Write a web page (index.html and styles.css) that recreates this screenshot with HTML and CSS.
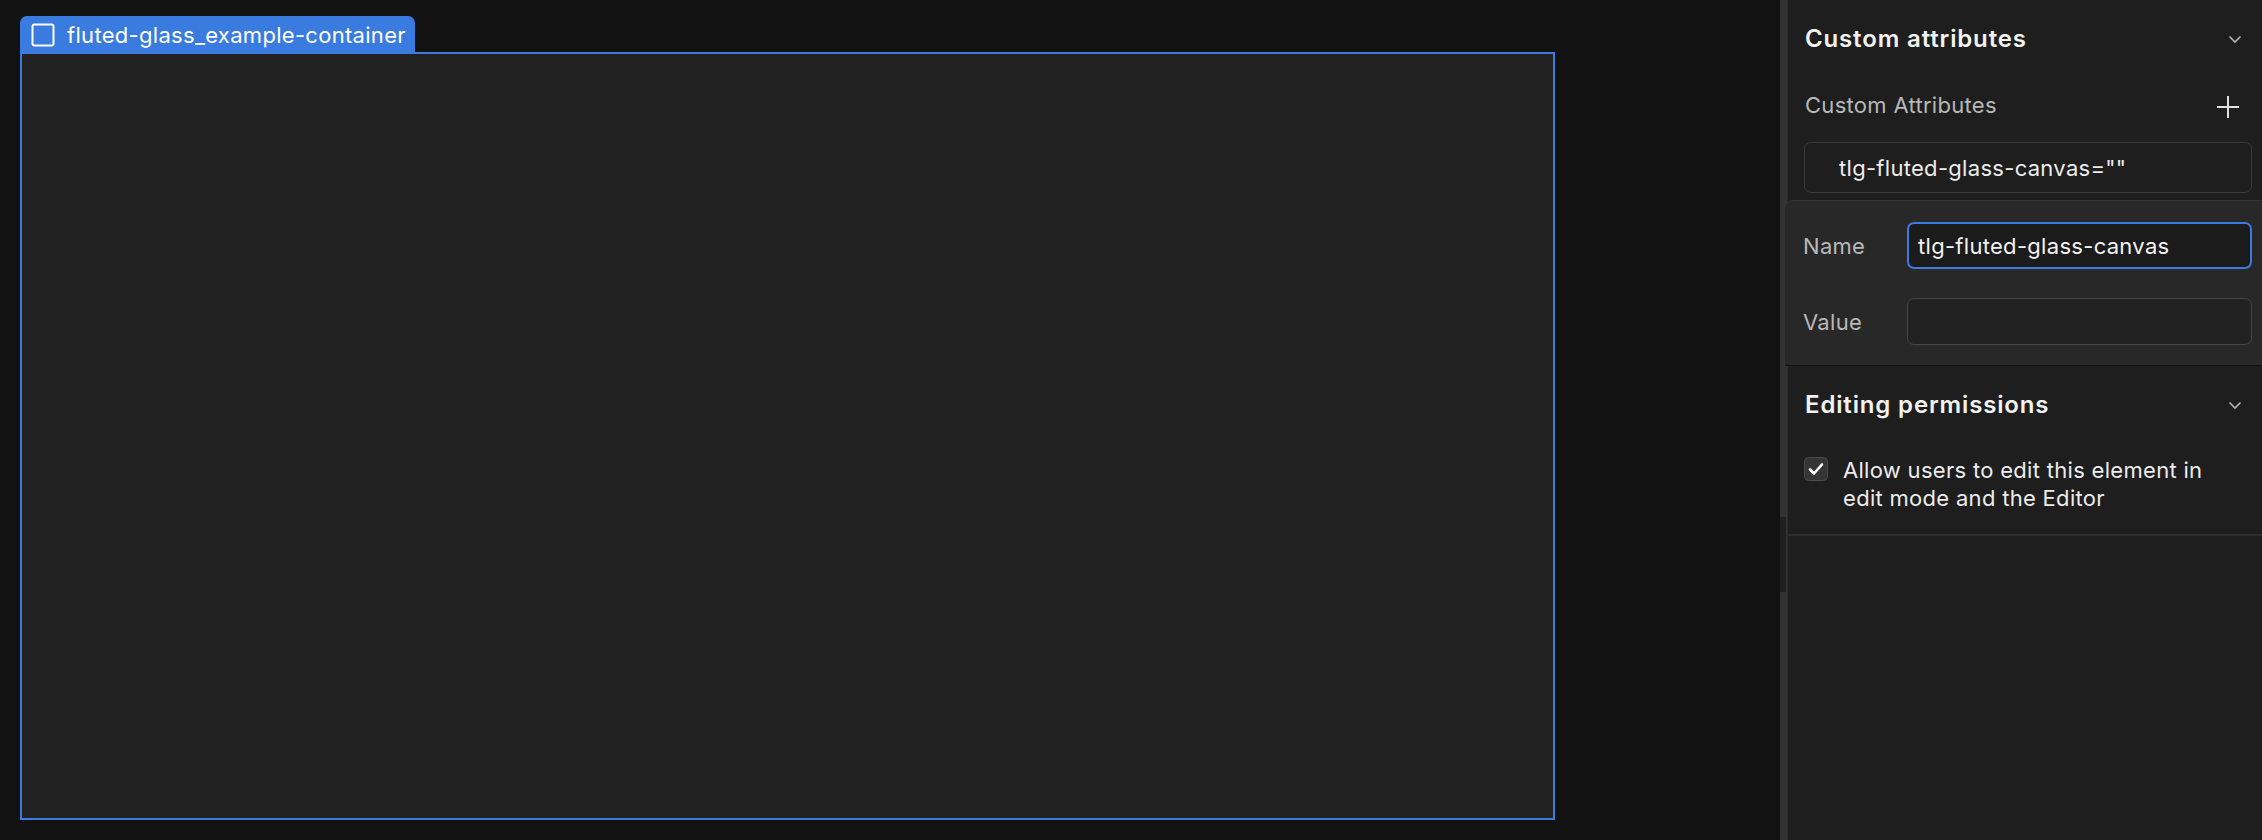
FILE: index.html
```html
<!DOCTYPE html>
<html>
  <head>
    <meta charset="UTF-8">
    <title>Custom attributes</title>
    <link rel="stylesheet" href="styles.css">
  </head>
  <body>
    <div class="canvas">
      <div class="tab">
        <svg class="tab-icon" width="24" height="24" viewBox="0 0 24 24"><rect x="1.5" y="1.5" width="21" height="21" rx="2" fill="none" stroke="#fff" stroke-width="2"/></svg>
        <span>fluted-glass_example-container</span>
      </div>
      <div class="frame"></div>
    </div>

    <div class="strip"><div class="strip-handle"></div></div>

    <div class="panel">
      <!-- Custom attributes -->
      <div class="section-head">
        <h3>Custom attributes</h3>
        <svg class="chevron" width="14" height="9" viewBox="0 0 14 9"><polyline points="1.5,1.5 7,7 12.5,1.5" fill="none" stroke="#b5b5b5" stroke-width="1.6"/></svg>
      </div>
      <div class="attr-label">
        <span>Custom Attributes</span>
        <svg width="24" height="24" viewBox="0 0 24 24"><path d="M12 1v22M1 12h22" stroke="#e0e0e0" stroke-width="2" fill="none"/></svg>
      </div>
      <div class="attr-item">tlg-fluted-glass-canvas=""</div>

      <div class="popover">
        <div class="field">
          <label>Name</label>
          <div class="input focus">tlg-fluted-glass-canvas</div>
        </div>
        <div class="field">
          <label>Value</label>
          <div class="input"></div>
        </div>
      </div>

      <!-- Editing permissions -->
      <div class="section-head">
        <h3>Editing permissions</h3>
        <svg class="chevron" width="14" height="9" viewBox="0 0 14 9"><polyline points="1.5,1.5 7,7 12.5,1.5" fill="none" stroke="#b5b5b5" stroke-width="1.6"/></svg>
      </div>
      <div class="check-row">
        <svg class="check" width="24" height="24" viewBox="0 0 24 24"><rect x="0.5" y="0.5" width="23" height="23" rx="4" fill="#353535" stroke="#4a4a4a"/><path d="M6 12.5l4 4 8-9" fill="none" stroke="#fff" stroke-width="2.6" stroke-linecap="round" stroke-linejoin="round"/></svg>
        <span>Allow users to edit this element in edit mode and the Editor</span>
      </div>
      <div class="divider"></div>
    </div>
  </body>
</html>
```

FILE: styles.css
```css
html, body { margin: 0; height: 100%; }
body { display: flex; background: #121212; font-family: Inter, "Noto Sans", sans-serif; color: #f0f0f0; letter-spacing: 0.3px; overflow: hidden; }

.canvas { width: 1780px; padding: 16px 0 0 20px; box-sizing: border-box; }
.tab { display: inline-flex; align-items: center; height: 37px; padding: 0 9px 0 11px; background: #3a7be0; border-radius: 7px 7px 0 0; font-size: 22px; color: #fff; }
.tab-icon { margin-right: 12px; }
.frame { width: 1535px; height: 768px; margin-top: -1px; box-sizing: border-box; border: 2px solid #3a7be0; background: #222222; }

.strip { width: 8px; background: #333333; border-right: 1px solid #2c2c2c; box-sizing: border-box; padding-top: 517px; }
.strip-handle { height: 75px; width: 6px; background: #1f1f1f; }

.panel { flex: 1; background: #1e1e1e; }
.section-head { display: flex; align-items: center; justify-content: space-between; height: 76px; padding: 0 20px 0 17px; }
.section-head h3 { margin: 0; font-size: 24px; font-weight: 600; color: #f2f2f2; letter-spacing: 0.85px; }
.chevron { margin-top: 2px; }
.attr-label { display: flex; align-items: center; justify-content: space-between; height: 40px; margin-top: 9px; padding: 0 22px 0 17px; font-size: 22px; color: #b8b8b8; }
.attr-label svg { margin-top: 4px; }
.attr-item { margin: 17px 10px 0 16px; height: 51px; box-sizing: border-box; border: 1px solid #3a3a3a; border-radius: 7px; padding-left: 34px; display: flex; align-items: center; font-size: 22px; color: #ececec; }

.popover { margin: 7px 0 0 -3px; padding: 21px 10px 20px 18px; background: #282828; border-top: 1px solid #363636; border-radius: 8px 0 0 0; border-bottom: 1px solid #131313; }
.field { display: flex; align-items: center; }
.field + .field { margin-top: 29px; }
.field label { width: 104px; font-size: 22px; color: #b8b8b8; }
.input { flex: 1; height: 47px; box-sizing: border-box; border: 1.5px solid #454545; border-radius: 7px; background: #222; padding-left: 9px; display: flex; align-items: center; font-size: 22px; color: #f2f2f2; }
.input.focus { border: 2px solid #3a7be0; background: #1b1b1b; }

.check-row { display: flex; align-items: flex-start; padding: 14px 10px 22px 16px; font-size: 22px; line-height: 28px; color: #ececec; }
.check { flex: none; margin: 1px 15px 0 0; }
.check-row span { width: 385px; }
.divider { height: 2px; background: #2f2f2f; }
```
